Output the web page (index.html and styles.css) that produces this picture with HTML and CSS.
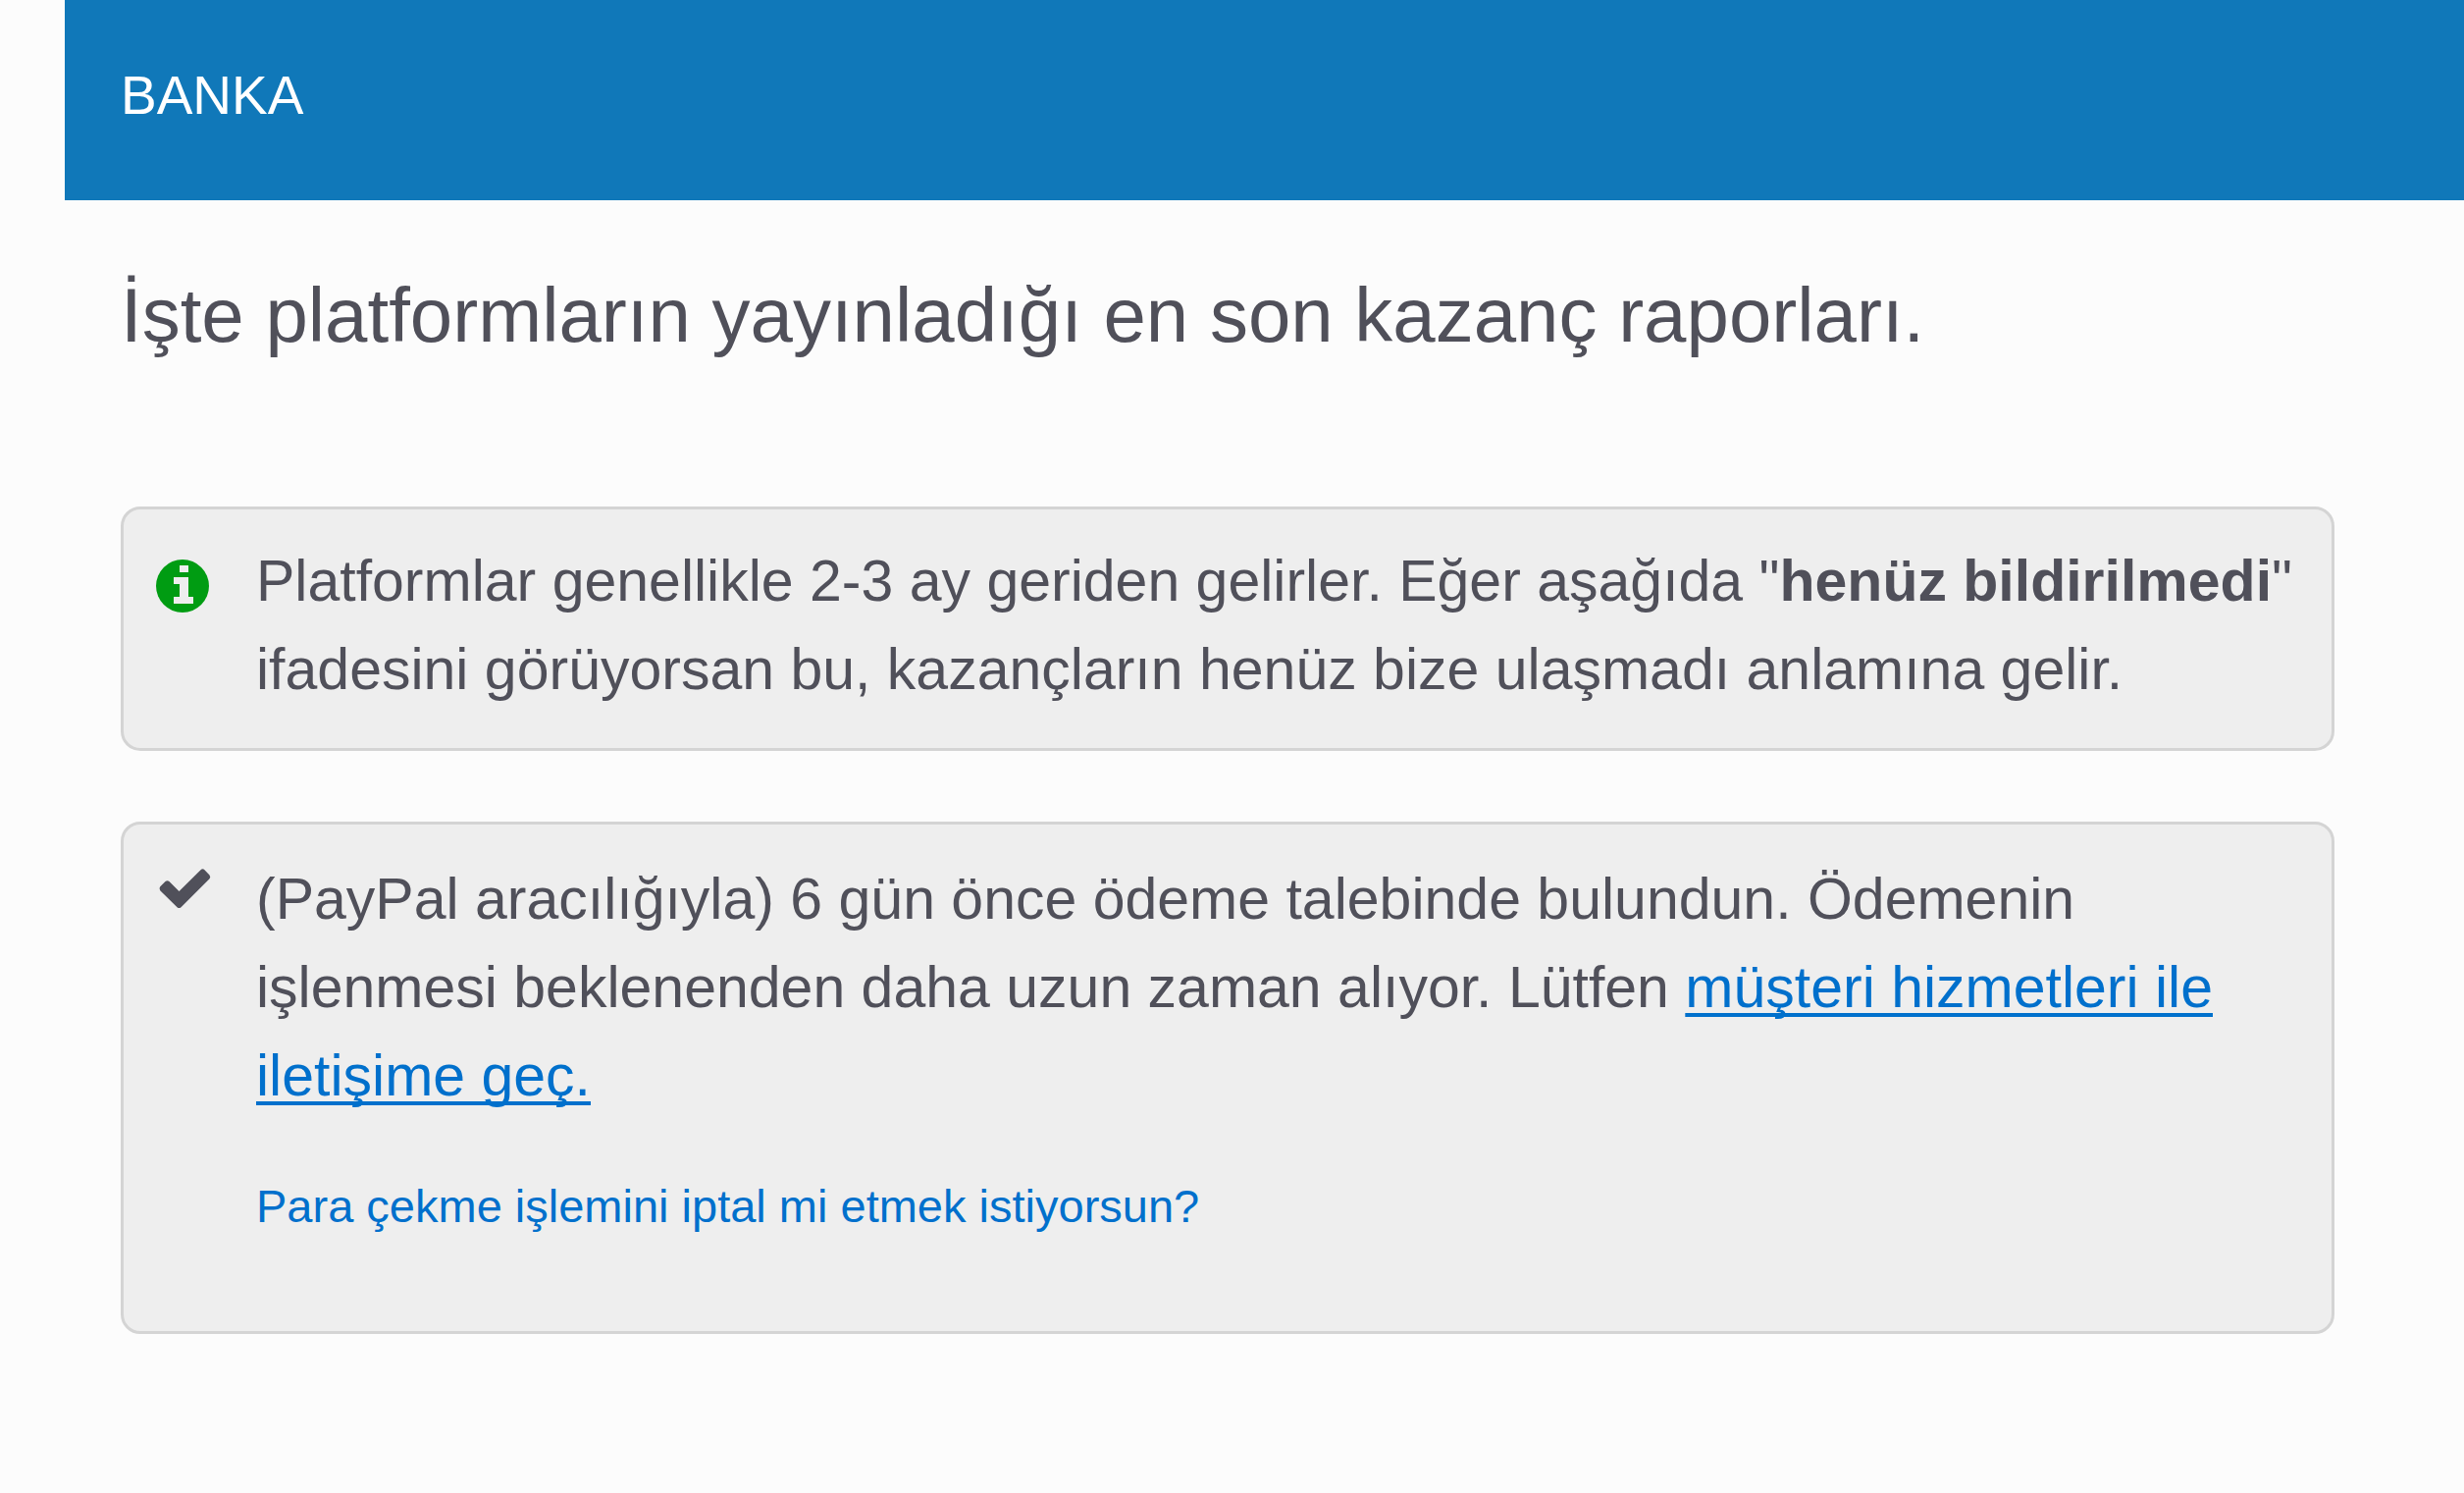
FILE: index.html
```html
<!DOCTYPE html>
<html lang="tr">
<head>
  <meta charset="UTF-8" />
  <meta name="viewport" content="width=device-width, initial-scale=1.0"/>
  <title>Banka</title>
  <link rel="stylesheet" href="styles.css">
</head>
<body>

  <header class="banner">BANKA</header>

  <main>
    <h1>İşte platformların yayınladığı en son kazanç raporları.</h1>

    <!-- Reporting delay notice -->
    <section class="card">
      <svg class="icon icon-info" viewBox="0 0 54 54" aria-hidden="true">
        <circle cx="27" cy="27" r="27" fill="currentColor"/>
        <path fill="#eee" d="M24 6h9v7h-9zM18 18h15v20h5v7H18v-7h6V25h-6z"/>
      </svg>
      <div class="card-body">
        <p>Platformlar genellikle 2-3 ay geriden gelirler. Eğer aşağıda "<strong>henüz bildirilmedi</strong>" ifadesini görüyorsan bu, kazançların henüz bize ulaşmadı anlamına gelir.</p>
      </div>
    </section>

    <!-- Withdrawal status -->
    <section class="card card-payment">
      <svg class="icon" viewBox="0 0 54 54" aria-hidden="true">
        <path fill="currentColor" d="M21.5 53.2Q23.5 55 25.5 53.2L54.5 24.3Q56 22.5 54.5 20.5L49.5 15.2Q47.5 13.5 45.5 15.2L23.5 37L13.5 27Q11.5 25.5 9.5 27L4.2 32.3Q2.7 34.3 4.2 36.3Z"/>
      </svg>
      <div class="card-body">
        <p>(PayPal aracılığıyla) 6 gün önce ödeme talebinde bulundun. Ödemenin işlenmesi beklenenden daha uzun zaman alıyor. Lütfen <a class="support" href="#">müşteri hizmetleri ile iletişime geç.</a></p>
        <a class="cancel" href="#">Para çekme işlemini iptal mi etmek istiyorsun?</a>
      </div>
    </section>
  </main>

</body>
</html>
```

FILE: styles.css
```css
* {
  box-sizing: border-box;
}
body {
  margin: 0;
  font-family: Helvetica, "Liberation Sans", Arial, sans-serif;
  background-color: #fcfcfc;
  color: #50505a;
}
a {
  color: #0070cc;
}
.banner {
  margin-left: 66px;
  padding: 64px 57px 74px;
  background-color: #1078b9;
  color: #fff;
  font-size: 55px;
  line-height: 66px;
}
main {
  padding: 69px 132px 72px 123px;
}
h1 {
  margin: 0 0 147px;
  font-size: 78px;
  font-weight: normal;
  line-height: 96px;
}
.card {
  display: flex;
  align-items: flex-start;
  gap: 48px;
  padding: 28px 36px 35px 33px;
  background-color: #eee;
  border: 3px solid #d4d4d4;
  border-radius: 20px;
}
.card + .card {
  margin-top: 72px;
}
.card-payment {
  padding-top: 31px;
  padding-bottom: 91px;
}
.icon {
  flex: none;
  width: 54px;
  height: 54px;
  overflow: visible;
}
.icon-info {
  margin-top: 23px;
  color: #009c12;
}
.card-body {
  flex: 1;
}
.card-body p {
  margin: 0;
  font-size: 59px;
  line-height: 90px;
}
.support {
  text-decoration-thickness: 4px;
  text-underline-offset: 6px;
  text-decoration-skip-ink: none;
}
.cancel {
  display: block;
  margin-top: 52px;
  font-size: 47px;
  line-height: 72px;
  text-decoration: none;
}
```
